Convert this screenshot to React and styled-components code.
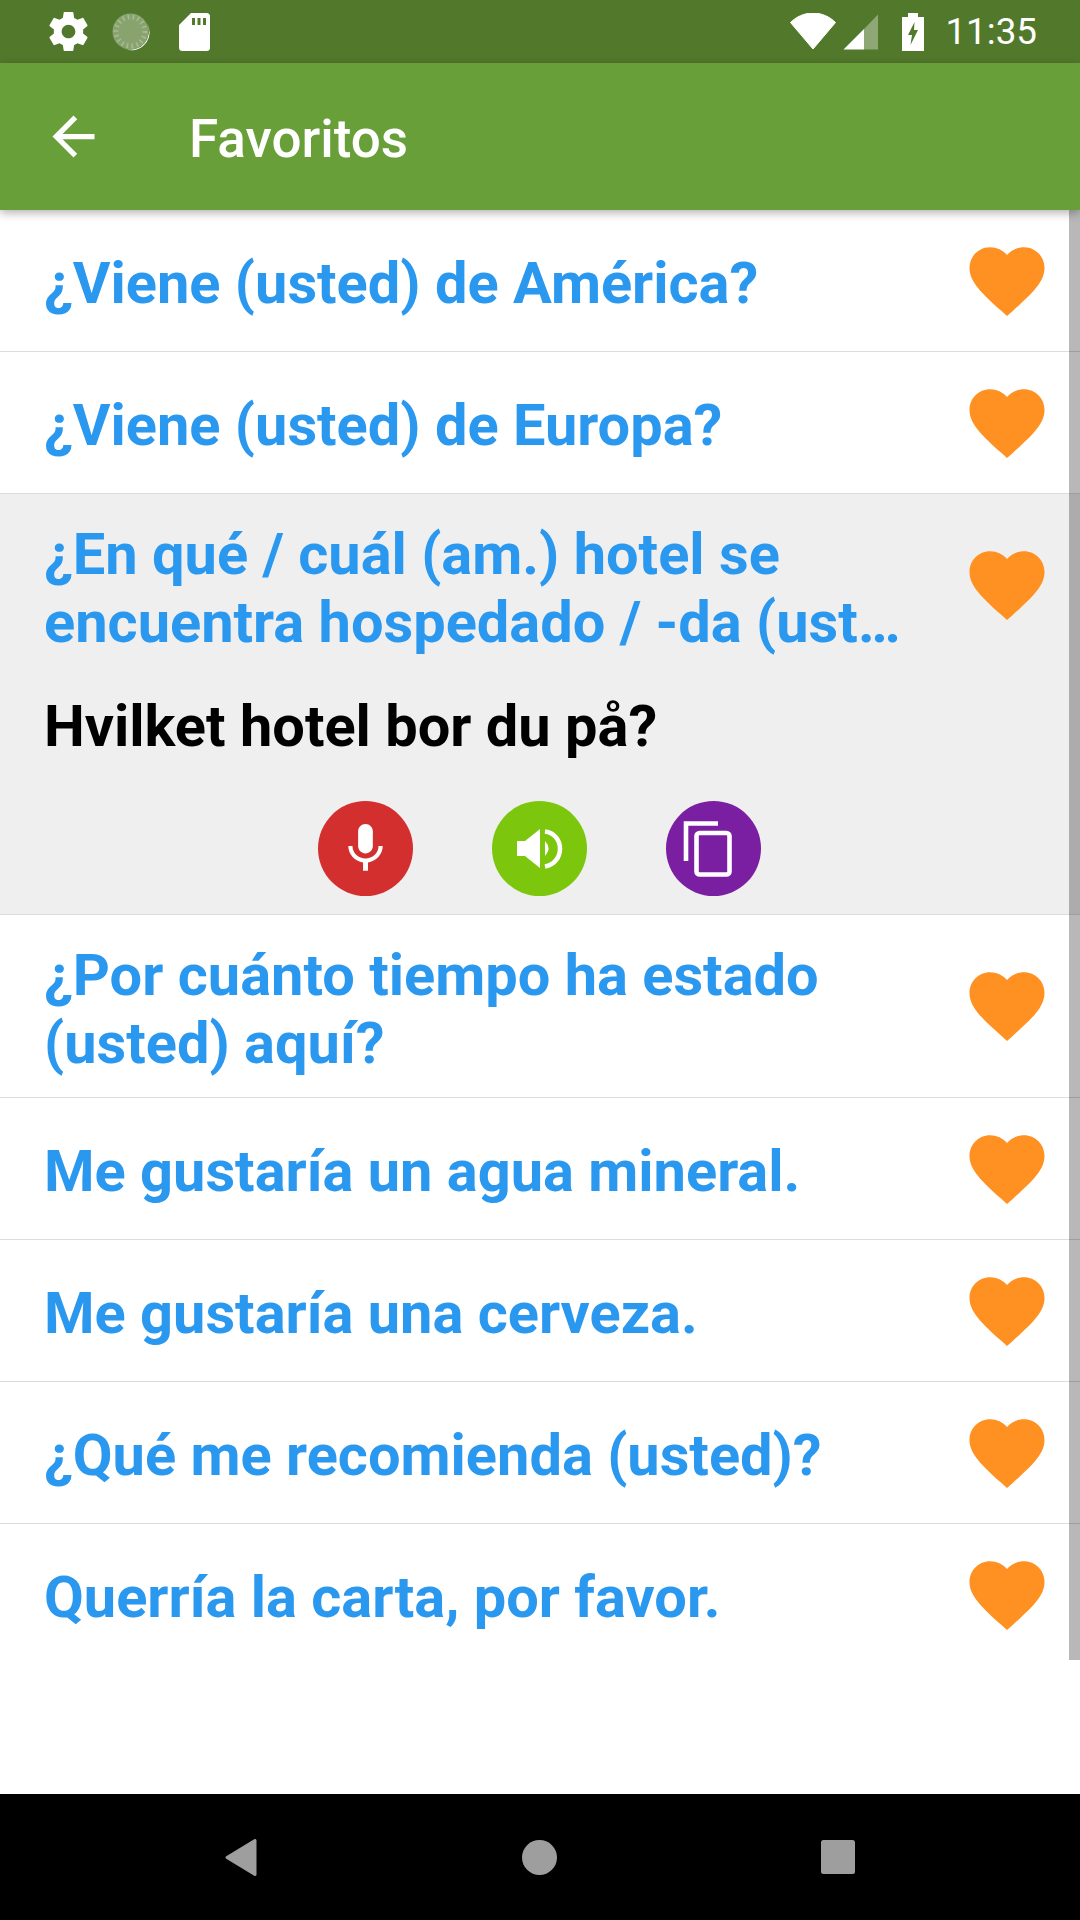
import React from 'react';
import styled, { createGlobalStyle } from 'styled-components';

const GlobalStyle = createGlobalStyle`
  html, body {
    margin: 0;
    padding: 0;
    background: #fff;
  }
  * {
    box-sizing: border-box;
  }
`;

const Screen = styled.div`
  width: 1080px;
  height: 1920px;
  display: flex;
  flex-direction: column;
  overflow: hidden;
  font-family: Roboto, "Liberation Sans", sans-serif;
`;

const StatusBar = styled.div`
  height: 63px;
  flex: none;
  background: #52782c;
  display: flex;
  align-items: center;
  padding: 0 43px 0 45px;
  color: #fff;
`;

const StatusGroup = styled.div`
  display: flex;
  align-items: center;
  gap: ${(p) => p.$gap}px;
`;

const BatteryGroup = styled.div`
  display: flex;
  align-items: center;
  margin-left: 23px;
`;

const StatusTime = styled.span`
  font-size: 36.75px;
  font-weight: 400;
  margin-left: 21px;
`;

const Spacer = styled.div`
  flex: 1;
`;

const AppBar = styled.header`
  height: 147px;
  flex: none;
  background: #689f38;
  display: flex;
  align-items: center;
  padding-left: 42px;
  box-shadow: 0 3px 9px rgba(0, 0, 0, 0.3);
  position: relative;
  z-index: 2;
`;

const Title = styled.h1`
  margin: 5px 0 0 84px;
  color: #fff;
  font-size: 53px;
  font-weight: 500;
  line-height: 1;
`;

const List = styled.main`
  flex: 1;
  position: relative;
  background: #fff;
`;

const ScrollThumb = styled.div`
  position: absolute;
  top: 0;
  right: 0;
  width: 11px;
  height: 1450px;
  background: rgba(0, 0, 0, 0.28);
`;

const Row = styled.div`
  border-bottom: ${(p) => (p.$last ? 'none' : '1px solid #dcdcdc')};
  background: ${(p) => (p.$open ? '#efefef' : 'transparent')};
`;

const RowHead = styled.div`
  min-height: 141px;
  padding: 23px 28px 23px 44px;
  display: flex;
  align-items: center;
  justify-content: space-between;
`;

const Phrase = styled.div`
  width: 870px;
  padding-top: 2.5px;
  margin-bottom: -2.5px;
  color: #2b98f0;
  font-size: 57.75px;
  font-weight: 700;
  line-height: 68px;
  white-space: pre-line;
`;

const Translation = styled.div`
  padding: 16px 44px 0;
  color: #000;
  font-size: 57.75px;
  font-weight: 700;
  line-height: 68px;
`;

const Actions = styled.div`
  display: flex;
  justify-content: center;
  gap: 79px;
  padding: 41px 2px 18px 0;
`;

const ActionButton = styled.button`
  width: 95px;
  height: 95px;
  border: none;
  border-radius: 50%;
  padding: 0;
  background: ${(p) => p.$color};
  display: flex;
  align-items: center;
  justify-content: center;
`;

const NavBar = styled.nav`
  height: 126px;
  flex: none;
  background: #000;
  display: flex;
  align-items: center;
  justify-content: space-between;
  padding: 0 225px;
`;

const SdSvg = styled.svg`
  margin-left: 9px;
`;

const Heart = () => (
  <svg width="90" height="90" viewBox="0 0 24 24" fill="#ff9022">
    <path d="M12 21.35l-1.45-1.32C5.4 15.36 2 12.28 2 8.5 2 5.42 4.42 3 7.5 3c1.74 0 3.41.81 4.5 2.09C13.09 3.81 14.76 3 16.5 3 19.58 3 22 5.42 22 8.5c0 3.78-3.4 6.86-8.55 11.54L12 21.35z" />
  </svg>
);

const GearIcon = () => (
  <svg width="47" height="47" viewBox="0 0 24 24" fill="#fff">
    <path d="M19.43 12.98c.04-.32.07-.64.07-.98s-.03-.66-.07-.98l2.11-1.65c.19-.15.24-.42.12-.64l-2-3.46c-.12-.22-.39-.3-.61-.22l-2.49 1c-.52-.4-1.08-.73-1.69-.98l-.38-2.65C14.46 2.18 14.25 2 14 2h-4c-.25 0-.46.18-.49.42l-.38 2.65c-.61.25-1.17.59-1.69.98l-2.49-1c-.23-.09-.49 0-.61.22l-2 3.46c-.13.22-.07.49.12.64l2.11 1.65c-.04.32-.07.65-.07.98s.03.66.07.98l-2.11 1.65c-.19.15-.24.42-.12.64l2 3.46c.12.22.39.3.61.22l2.49-1c.52.4 1.08.73 1.69.98l.38 2.65c.03.24.24.42.49.42h4c.25 0 .46-.18.49-.42l.38-2.65c.61-.25 1.17-.59 1.69-.98l2.49 1c.23.09.49 0 .61-.22l2-3.46c.12-.22.07-.49-.12-.64l-2.11-1.65zM12 15.5c-1.93 0-3.5-1.57-3.5-3.5s1.57-3.5 3.5-3.5 3.5 1.57 3.5 3.5-1.57 3.5-3.5 3.5z" />
  </svg>
);

const SyncDial = () => (
  <svg width="38" height="38" viewBox="0 0 38 38">
    <circle cx="18.5" cy="18.5" r="18" fill="#fff" fillOpacity="0.32" />
    <circle cx="18.5" cy="18.5" r="14.5" fill="none" stroke="#fff" strokeOpacity="0.25" strokeWidth="5" strokeDasharray="1.6 3.4" />
    <path d="M35 10 A18.5 18.5 0 0 1 13 36 A18 18 0 0 0 35 10 Z" fill="#fff" />
  </svg>
);

const SdIcon = () => (
  <SdSvg width="31" height="38" viewBox="0 0 31 38">
    <path
      fillRule="evenodd"
      fill="#fff"
      d="M12 0H27.5A3.5 3.5 0 0 1 31 3.5V34.5A3.5 3.5 0 0 1 27.5 38H3.5A3.5 3.5 0 0 1 0 34.5V12ZM13 5V12H16V5ZM18.5 5V12H21.5V5ZM24 5V12H27V5Z"
    />
  </SdSvg>
);

const WifiIcon = () => (
  <svg width="46" height="37" viewBox="0 0 46 37">
    <path d="M0.5 9.5C6 4 14 0 23 0S40 4 45.5 9.5L23 36Z" fill="#fff" stroke="#fff" strokeLinejoin="round" />
  </svg>
);

const SignalIcon = () => (
  <svg width="36" height="36" viewBox="0 0 36 36">
    <path d="M35 0.5V35.5H21V15Z" fill="#fff" fillOpacity="0.35" />
    <path d="M21 15V35.5H0.5Z" fill="#fff" />
  </svg>
);

const BatteryIcon = () => (
  <svg width="22" height="38" viewBox="0 0 22 38">
    <path
      fillRule="evenodd"
      fill="#fff"
      d="M6 0H16V4H22V38H0V4H6ZM12.5 9L6 22H10L8.5 32L16 17H12Z"
    />
  </svg>
);

const BackIcon = () => (
  <svg width="63" height="63" viewBox="0 0 24 24" fill="#fff">
    <path d="M20 11H7.83l5.59-5.59L12 4l-8 8 8 8 1.41-1.41L7.83 13H20v-2z" />
  </svg>
);

const MicIcon = () => (
  <svg width="59" height="59" viewBox="0 0 24 24" fill="#fff">
    <path d="M12 14c1.66 0 2.99-1.34 2.99-3L15 5c0-1.66-1.34-3-3-3S9 3.34 9 5v6c0 1.66 1.34 3 3 3zm5.3-3c0 3-2.54 5.1-5.3 5.1S6.7 14 6.7 11H5c0 3.41 2.72 6.23 6 6.72V21h2v-3.28c3.28-.48 6-3.3 6-6.72h-1.7z" />
  </svg>
);

const SpeakerIcon = () => (
  <svg width="95" height="95" viewBox="0 0 95 95" fill="#fff">
    <path d="M25 40H33L48 28V67L33 55H25Z" />
    <path d="M53 40Q60 47.5 53 55Z" />
    <path d="M53 30.5C73 33 73 62 53 65.5" fill="none" stroke="#fff" strokeWidth="4.5" />
  </svg>
);

const CopyIcon = () => (
  <svg width="95" height="95" viewBox="0 0 95 95" fill="none" stroke="#fff" strokeWidth="4.6">
    <path d="M52 22.5H20V60" />
    <rect x="30.5" y="32" width="33" height="41.5" rx="3" />
  </svg>
);

const NavBack = () => (
  <svg width="32" height="37" viewBox="0 0 32 37">
    <path d="M30 1.5V35.5L2 18.5Z" fill="#9e9e9e" stroke="#9e9e9e" strokeWidth="3" strokeLinejoin="round" />
  </svg>
);

const NavHome = () => (
  <svg width="35" height="35" viewBox="0 0 35 35">
    <circle cx="17.5" cy="17.5" r="17.5" fill="#9e9e9e" />
  </svg>
);

const NavRecent = () => (
  <svg width="34" height="34" viewBox="0 0 34 34">
    <rect width="34" height="34" rx="2.5" fill="#9e9e9e" />
  </svg>
);

const phrases = [
  { text: '¿Viene (usted) de América?' },
  { text: '¿Viene (usted) de Europa?' },
  {
    text: '¿En qué / cuál (am.) hotel se\nencuentra hospedado / -da (ust…',
    translation: 'Hvilket hotel bor du på?',
  },
  { text: '¿Por cuánto tiempo ha estado\n(usted) aquí?' },
  { text: 'Me gustaría un agua mineral.' },
  { text: 'Me gustaría una cerveza.' },
  { text: '¿Qué me recomienda (usted)?' },
  { text: 'Querría la carta, por favor.' },
];

export default function App() {
  return (
    <Screen>
      <GlobalStyle />
      <StatusBar>
        <StatusGroup $gap={20}>
          <GearIcon />
          <SyncDial />
          <SdIcon />
        </StatusGroup>
        <Spacer />
        <StatusGroup $gap={7}>
          <WifiIcon />
          <SignalIcon />
        </StatusGroup>
        <BatteryGroup>
          <BatteryIcon />
          <StatusTime>11:35</StatusTime>
        </BatteryGroup>
      </StatusBar>

      <AppBar>
        <BackIcon />
        <Title>Favoritos</Title>
      </AppBar>

      <List>
        {phrases.map((phrase, index) => (
          <Row key={index} $open={!!phrase.translation} $last={index === phrases.length - 1}>
            <RowHead>
              <Phrase>{phrase.text}</Phrase>
              <Heart />
            </RowHead>
            {phrase.translation && (
              <>
                <Translation>{phrase.translation}</Translation>
                <Actions>
                  <ActionButton $color="#d32f2f"><MicIcon /></ActionButton>
                  <ActionButton $color="#7cc70e"><SpeakerIcon /></ActionButton>
                  <ActionButton $color="#7b1fa2"><CopyIcon /></ActionButton>
                </Actions>
              </>
            )}
          </Row>
        ))}
        <ScrollThumb />
      </List>

      <NavBar>
        <NavBack />
        <NavHome />
        <NavRecent />
      </NavBar>
    </Screen>
  );
}
